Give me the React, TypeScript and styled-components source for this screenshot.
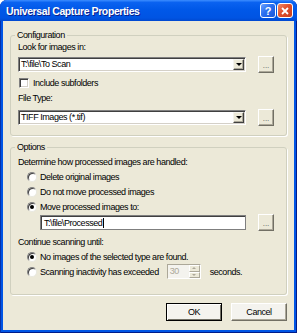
import React from 'react';
import styled, { createGlobalStyle } from 'styled-components';

const GlobalStyle = createGlobalStyle`
  html, body {
    margin: 0;
    padding: 0;
    background: #fff;
  }
  body {
    font-family: "Liberation Sans", Arial, sans-serif;
  }
`;

const Window = styled.div`
  width: 297px;
  height: 333px;
  box-sizing: border-box;
  display: flex;
  flex-direction: column;
  padding: 0 3px 3px;
  background: #0055e5;
  border-radius: 7px 7px 0 0;
  box-shadow: inset 1px 0 #0831a8, inset -1px 0 #001c8a, inset 0 -1px #001c8a;
`;

const TitleBar = styled.div`
  height: 21px;
  margin: 0 -3px;
  display: flex;
  align-items: center;
  padding: 0 4px 0 6px;
  border-radius: 7px 7px 0 0;
  background: linear-gradient(
    to bottom,
    #3c8dff 0%,
    #0a62f0 12%,
    #0058e8 45%,
    #0054e3 85%,
    #0048d0 100%
  );
`;

const Title = styled.div`
  flex: 1;
  color: #fff;
  font-size: 10.5px;
  font-weight: bold;
  letter-spacing: -0.4px;
  text-shadow: 1px 1px #0a1f8a;
`;

const CaptionButtons = styled.div`
  display: flex;
  gap: 1px;
`;

const CaptionButton = styled.div<{ $close?: boolean }>`
  width: 16px;
  height: 15px;
  box-sizing: border-box;
  border: 1px solid #fff;
  border-radius: 3px;
  display: flex;
  align-items: center;
  justify-content: center;
  color: #fff;
  font-size: 11px;
  font-weight: bold;
  background: ${p =>
    p.$close
      ? 'linear-gradient(135deg, #f08a6a 0%, #e0502c 45%, #c8401e 100%)'
      : 'linear-gradient(135deg, #6aa2ff 0%, #2b6ff0 45%, #1a56d8 100%)'};
`;

const Body = styled.div`
  flex: 1;
  display: flex;
  flex-direction: column;
  padding: 9px 7px 0;
  background: #ece9d8;
  color: #000;
  font-size: 9px;
  letter-spacing: -0.45px;
`;

const Group = styled.fieldset<{ $mt?: number; $pb: number }>`
  margin: ${p => p.$mt ?? 0}px 0 0;
  padding: 0 12px ${p => p.$pb}px 7px;
  min-width: 0;
  border: 1px solid #d0d0bf;
  border-radius: 3px;
  box-shadow: 1px 1px 0 #fff;
  display: flex;
  flex-direction: column;
`;

const Legend = styled.legend`
  margin-left: -3px;
  padding: 0 2px;
  height: 11px;
  line-height: 11px;
`;

const Label = styled.div<{ $mt?: number }>`
  height: 11px;
  line-height: 11px;
  margin-top: ${p => p.$mt ?? 0}px;
  white-space: nowrap;
`;

const FieldRow = styled.div<{ $mt?: number; $indent?: number }>`
  display: flex;
  align-items: center;
  gap: 12px;
  height: 17px;
  margin-top: ${p => p.$mt ?? 0}px;
  padding-left: ${p => p.$indent ?? 0}px;
`;

const Combo = styled.div`
  flex: 1;
  height: 15px;
  box-sizing: border-box;
  display: flex;
  align-items: center;
  padding: 0 1px 0 2px;
  background: #fff;
  border: 1px solid;
  border-color: #808080 #fff #fff #808080;
  box-shadow: inset 1px 1px #404040, inset -1px -1px #d4d0c8;
`;

const ComboText = styled.div`
  flex: 1;
  line-height: 11px;
  white-space: nowrap;
`;

const DropButton = styled.div`
  width: 11px;
  height: 11px;
  box-sizing: border-box;
  display: flex;
  align-items: center;
  justify-content: center;
  background: #ece9d8;
  border: 1px solid;
  border-color: #f4f3ee #404040 #404040 #f4f3ee;
  box-shadow: inset -1px -1px #aca899;
`;

const ArrowDown = styled.span<{ $color?: string; $size?: number }>`
  width: 0;
  height: 0;
  border-left: ${p => p.$size ?? 3}px solid transparent;
  border-right: ${p => p.$size ?? 3}px solid transparent;
  border-top: ${p => p.$size ?? 3}px solid ${p => p.$color ?? '#000'};
`;

const ArrowUp = styled.span<{ $color?: string; $size?: number }>`
  width: 0;
  height: 0;
  border-left: ${p => p.$size ?? 3}px solid transparent;
  border-right: ${p => p.$size ?? 3}px solid transparent;
  border-bottom: ${p => p.$size ?? 3}px solid ${p => p.$color ?? '#000'};
`;

const TextInput = styled.div`
  flex: 1;
  height: 15px;
  box-sizing: border-box;
  display: flex;
  align-items: center;
  padding: 0 3px;
  background: #fff;
  border: 1px solid #7f7f7f;
  box-shadow: inset 1px 1px #404040;
  white-space: nowrap;
`;

const Caret = styled.span`
  width: 1px;
  height: 10px;
  margin-left: 1px;
  background: #000;
`;

const BrowseButton = styled.div`
  width: 16px;
  height: 17px;
  box-sizing: border-box;
  flex: none;
  display: flex;
  align-items: flex-end;
  justify-content: center;
  padding-bottom: 3px;
  background: #ece9d8;
  border: 1px solid;
  border-color: #fff #716f64 #716f64 #fff;
  box-shadow: inset -1px -1px #aca899;
  color: #555;
  font-size: 8px;
  line-height: 6px;
  letter-spacing: 0;
`;

const CheckRow = styled.label<{ $mt?: number }>`
  display: flex;
  align-items: center;
  gap: 4px;
  height: 11px;
  margin-top: ${p => p.$mt ?? 0}px;
  padding-left: 1px;
`;

const CheckBox = styled.span`
  width: 10px;
  height: 10px;
  box-sizing: border-box;
  flex: none;
  background: #fff;
  border: 1px solid;
  border-color: #808080 #fff #fff #808080;
  box-shadow: inset 1px 1px #404040, inset -1px -1px #d4d0c8;
`;

const OptionRow = styled.label<{ $mt?: number }>`
  display: flex;
  align-items: center;
  gap: 3px;
  height: 15px;
  margin-top: ${p => p.$mt ?? 0}px;
  padding-left: 9px;
  white-space: nowrap;
`;

const Radio = styled.span`
  width: 10px;
  height: 10px;
  box-sizing: border-box;
  flex: none;
  display: flex;
  align-items: center;
  justify-content: center;
  border-radius: 50%;
  background: #fff;
  border: 1px solid;
  border-color: #808080 #e8e8e0 #e8e8e0 #808080;
  box-shadow: inset 1px 1px #404040;
`;

const RadioDot = styled.span`
  width: 4px;
  height: 4px;
  border-radius: 50%;
  background: #000;
`;

const Spinner = styled.div`
  display: flex;
  width: 34px;
  height: 15px;
  box-sizing: border-box;
  margin: 0 6px 0 5px;
  background: #f4f3ee;
  border: 1px solid;
  border-color: #aca899 #fff #fff #aca899;
`;

const SpinValue = styled.div`
  flex: 1;
  padding-left: 2px;
  line-height: 13px;
  color: #aca899;
`;

const SpinButtons = styled.div`
  width: 11px;
  display: flex;
  flex-direction: column;
`;

const SpinHalf = styled.div`
  flex: 1;
  display: flex;
  align-items: center;
  justify-content: center;
  background: #ece9d8;
  border: 1px solid;
  border-color: #fff #aca899 #aca899 #fff;
`;

const ButtonRow = styled.div`
  display: flex;
  justify-content: flex-end;
  gap: 9px;
  margin-top: 8px;
`;

const DialogButton = styled.div<{ $default?: boolean }>`
  width: 56px;
  height: 18px;
  box-sizing: border-box;
  display: flex;
  align-items: center;
  justify-content: center;
  background: #f4f3ee;
  border: 1px solid ${p => (p.$default ? '#000' : '#716f64')};
  border-top-color: ${p => (p.$default ? '#000' : '#fff')};
  border-left-color: ${p => (p.$default ? '#000' : '#fff')};
  box-shadow: ${p =>
    p.$default
      ? 'inset 1px 1px #fff, inset -1px -1px #716f64'
      : 'inset -1px -1px #aca899'};
`;

const App: React.FC = () => {
  return (
    <>
      <GlobalStyle />
      <Window>
        <TitleBar>
          <Title>Universal Capture Properties</Title>
          <CaptionButtons>
            <CaptionButton>?</CaptionButton>
            <CaptionButton $close>
              <svg width="8" height="8" viewBox="0 0 8 8">
                <path d="M1 1 L7 7 M7 1 L1 7" stroke="#fff" strokeWidth="1.8" />
              </svg>
            </CaptionButton>
          </CaptionButtons>
        </TitleBar>
        <Body>
          <Group $pb={9}>
            <Legend>Configuration</Legend>
            <Label $mt={1}>Look for images in:</Label>
            <FieldRow $mt={3}>
              <Combo>
                <ComboText>T:\file\To Scan</ComboText>
                <DropButton>
                  <ArrowDown $size={3} />
                </DropButton>
              </Combo>
              <BrowseButton>...</BrowseButton>
            </FieldRow>
            <CheckRow $mt={4}>
              <CheckBox />
              Include subfolders
            </CheckRow>
            <Label $mt={5}>File Type:</Label>
            <FieldRow $mt={5}>
              <Combo>
                <ComboText>TIFF Images (*.tif)</ComboText>
                <DropButton>
                  <ArrowDown $size={3} />
                </DropButton>
              </Combo>
              <BrowseButton>...</BrowseButton>
            </FieldRow>
          </Group>

          <Group $mt={6} $pb={15}>
            <Legend>Options</Legend>
            <Label $mt={4}>Determine how processed images are handled:</Label>
            <OptionRow $mt={1}>
              <Radio />
              Delete original images
            </OptionRow>
            <OptionRow>
              <Radio />
              Do not move processed images
            </OptionRow>
            <OptionRow>
              <Radio>
                <RadioDot />
              </Radio>
              Move processed images to:
            </OptionRow>
            <FieldRow $indent={22}>
              <TextInput>
                T:\file\Processed
                <Caret />
              </TextInput>
              <BrowseButton>...</BrowseButton>
            </FieldRow>
            <Label $mt={6}>Continue scanning until:</Label>
            <OptionRow $mt={1}>
              <Radio>
                <RadioDot />
              </Radio>
              No images of the selected type are found.
            </OptionRow>
            <OptionRow>
              <Radio />
              Scanning inactivity has exceeded
              <Spinner>
                <SpinValue>30</SpinValue>
                <SpinButtons>
                  <SpinHalf>
                    <ArrowUp $size={2} $color="#aca899" />
                  </SpinHalf>
                  <SpinHalf>
                    <ArrowDown $size={2} $color="#aca899" />
                  </SpinHalf>
                </SpinButtons>
              </Spinner>
              seconds.
            </OptionRow>
          </Group>

          <ButtonRow>
            <DialogButton $default>OK</DialogButton>
            <DialogButton>Cancel</DialogButton>
          </ButtonRow>
        </Body>
      </Window>
    </>
  );
};

export default App;
